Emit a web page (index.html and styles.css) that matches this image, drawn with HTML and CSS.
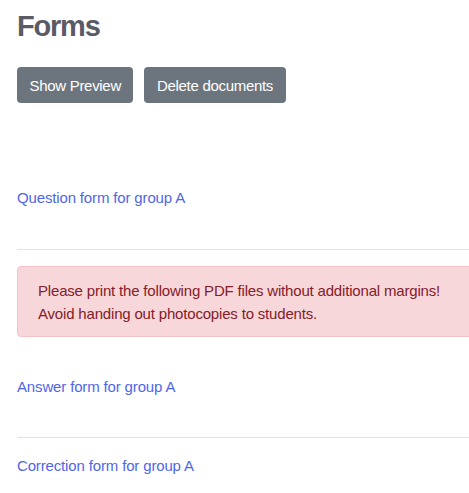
FILE: index.html
```html
<!DOCTYPE html>
<html lang="en">
<head>
<meta charset="utf-8">
<title>Forms</title>
<link rel="stylesheet" href="styles.css">
</head>
<body>
<main class="page">
  <h1 class="title">Forms</h1>
  <div class="actions">
    <button class="btn">Show Preview</button>
    <button class="btn">Delete documents</button>
  </div>
  <section class="forms">
    <a class="form-link first" href="#">Question form for group A</a>
    <hr class="divider">
    <div class="alert">
      Please print the following PDF files without additional margins!<br>
      Avoid handing out photocopies to students.
    </div>
    <a class="form-link answer" href="#">Answer form for group A</a>
    <hr class="divider second">
    <a class="form-link correction" href="#">Correction form for group A</a>
  </section>
</main>
</body>
</html>
```

FILE: styles.css
```css
html, body {
  margin: 0;
  padding: 0;
  overflow: hidden;
  background: #ffffff;
}
body {
  font-family: "Liberation Sans", Arial, sans-serif;
  font-size: 15px;
  color: #212529;
}
.page {
  width: 560px;
  padding: 0 17px;
}
.title {
  margin: 8px 0 0;
  font-size: 29px;
  line-height: 36px;
  font-weight: 700;
  color: #5b5b66;
  letter-spacing: -1.2px;
}
.actions {
  display: flex;
  gap: 11px;
  margin-top: 23px;
}
.btn {
  height: 36px;
  padding: 0 12.5px;
  border: none;
  border-radius: 4px;
  background: #6c757d;
  color: #ffffff;
  font-family: inherit;
  font-size: 15px;
  letter-spacing: -0.3px;
}
.forms {
  display: flex;
  flex-direction: column;
  align-items: flex-start;
}
.form-link {
  display: block;
  line-height: 22px;
  color: #4f67e6;
  text-decoration: none;
  letter-spacing: -0.15px;
}
.form-link.first { margin-top: 84px; }
.form-link.answer { margin-top: 39px; }
.form-link.correction { margin-top: 17px; }
.divider {
  align-self: stretch;
  margin: 40px 0 0;
  border: none;
  border-top: 1px solid #e3e3e3;
}
.divider.second { margin-top: 39px; }
.alert {
  align-self: stretch;
  margin-top: 16px;
  padding: 12px 20px 11px;
  background: #f8d7da;
  border: 1px solid #f5c2c7;
  border-radius: 4px;
  color: #842029;
  line-height: 23px;
  letter-spacing: -0.18px;
}
```
